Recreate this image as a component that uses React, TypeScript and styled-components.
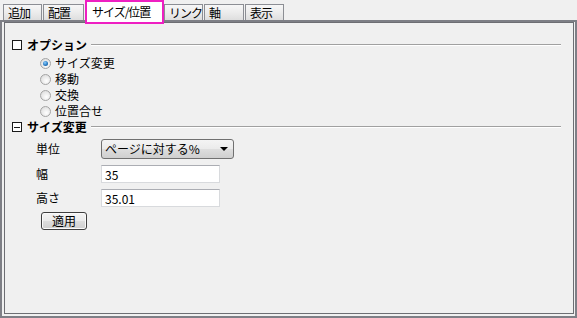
import React from "react";
import styled, { createGlobalStyle } from "styled-components";

const tabs = [
  { label: "追加", width: 39 },
  { label: "配置", width: 41 },
  { label: "サイズ/位置", width: 79, active: true },
  { label: "リンク", width: 39 },
  { label: "軸", width: 40 },
  { label: "表示", width: 39 },
];

const modes = ["サイズ変更", "移動", "交換", "位置合せ"];

export default function App() {
  return (
    <>
      <GlobalStyle />
      <Root>
        <TabBar>
          {tabs.map((t) => (
            <Tab key={t.label} $width={t.width} $active={!!t.active}>
              {t.label}
            </Tab>
          ))}
        </TabBar>
        <Panel>
          <Inner>
            <SectionHeader>
              <ToggleBox />
              <SectionTitle>オプション</SectionTitle>
              <Rule />
            </SectionHeader>
            <RadioList>
              {modes.map((m, i) => (
                <RadioRow key={m}>
                  <RadioDot $checked={i === 0} />
                  <span>{m}</span>
                </RadioRow>
              ))}
            </RadioList>

            <SectionHeader>
              <ToggleBox $open />
              <SectionTitle>サイズ変更</SectionTitle>
              <Rule />
            </SectionHeader>
            <FormGrid>
              <Label>単位</Label>
              <Dropdown>
                <span>ページに対する%</span>
                <Arrow />
              </Dropdown>
              <Label>幅</Label>
              <TextBox readOnly value="35" />
              <Label>高さ</Label>
              <TextBox readOnly value="35.01" />
            </FormGrid>
            <ApplyButton>適用</ApplyButton>
          </Inner>
        </Panel>
      </Root>
    </>
  );
}

const GlobalStyle = createGlobalStyle`
  html, body {
    margin: 0;
    padding: 0;
    background: #f0f0f0;
  }
  body {
    font-family: "Noto Sans CJK JP", "Noto Sans", sans-serif;
    font-size: 12px;
    color: #000;
  }
`;

const Root = styled.div`
  width: 577px;
  height: 318px;
  display: flex;
  flex-direction: column;
  overflow: hidden;
  background: #f0f0f0;
`;

const TabBar = styled.div`
  display: flex;
  align-items: flex-end;
  height: 20px;
  padding-left: 3px;
  gap: 1px;
`;

const Tab = styled.div<{ $width: number; $active: boolean }>`
  box-sizing: border-box;
  width: ${(p) => p.$width}px;
  height: ${(p) => (p.$active ? 24 : 16)}px;
  margin-bottom: ${(p) => (p.$active ? -4 : 0)}px;
  margin-right: ${(p) => (p.$active ? -1 : 0)}px;
  padding-left: ${(p) => (p.$active ? 5 : 4)}px;
  border: ${(p) => (p.$active ? "2px solid #ee1fc2" : "1px solid #8c8e94")};
  border-bottom: ${(p) => (p.$active ? "2px solid #ee1fc2" : "none")};
  background: ${(p) =>
    p.$active
      ? "#ffffff"
      : "linear-gradient(#f7f7f7 0%, #ececec 50%, #dedede 100%)"};
  line-height: ${(p) => (p.$active ? 19 : 15)}px;
  letter-spacing: -1px;
  white-space: nowrap;
  overflow: hidden;
  position: relative;
  z-index: ${(p) => (p.$active ? 1 : 0)};
`;

const Panel = styled.div`
  flex: 1;
  box-sizing: border-box;
  display: flex;
  border: 2px solid #7e7f86;
  padding: 0 1px 2px 2px;
`;

const Inner = styled.div`
  flex: 1;
  display: flex;
  flex-direction: column;
  align-items: flex-start;
  border: 1px solid #6d6e73;
  padding: 14px 0 0 7px;
`;

const SectionHeader = styled.div`
  display: flex;
  align-items: center;
  align-self: stretch;
  height: 16px;
  margin-right: 12px;
`;

const ToggleBox = styled.div<{ $open?: boolean }>`
  box-sizing: border-box;
  width: 10px;
  height: 10px;
  border: 1px solid #1a1a1a;
  background: #fff;
  margin-right: 5px;
  display: flex;
  align-items: center;
  justify-content: center;
  &::after {
    content: "";
    display: ${(p) => (p.$open ? "block" : "none")};
    width: 6px;
    height: 1px;
    background: #1a1a1a;
  }
`;

const SectionTitle = styled.span`
  font-weight: bold;
  line-height: 16px;
`;

const Rule = styled.div`
  flex: 1;
  height: 0;
  margin-left: 4px;
  border-top: 1px solid #a0a0a0;
  border-bottom: 1px solid #ffffff;
`;

const RadioList = styled.div`
  display: flex;
  flex-direction: column;
  padding-left: 28px;
  margin-top: 2px;
`;

const RadioRow = styled.div`
  display: flex;
  align-items: center;
  gap: 4px;
  height: 16px;
  line-height: 16px;
`;

const RadioDot = styled.div<{ $checked: boolean }>`
  box-sizing: border-box;
  width: 11px;
  height: 11px;
  border-radius: 50%;
  border: 1px solid #a4a4a4;
  background: radial-gradient(circle at 60% 65%, #ffffff 0%, #e2e2e2 70%, #cccccc 100%);
  display: flex;
  align-items: center;
  justify-content: center;
  &::after {
    content: "";
    display: ${(p) => (p.$checked ? "block" : "none")};
    width: 5px;
    height: 5px;
    border-radius: 50%;
    background: radial-gradient(circle at 40% 35%, #8fd0ff 0%, #2a7cc4 55%, #0e3f74 100%);
  }
`;

const FormGrid = styled.div`
  display: grid;
  grid-template-columns: 65px auto;
  row-gap: 6px;
  align-items: center;
  margin-top: 4px;
  padding-left: 24px;
`;

const Label = styled.span`
  line-height: 16px;
`;

const Dropdown = styled.div`
  box-sizing: border-box;
  width: 133px;
  height: 20px;
  display: flex;
  align-items: center;
  justify-content: space-between;
  padding: 0 5px 0 3px;
  border: 1px solid #707070;
  border-radius: 3px;
  background: linear-gradient(#f4f4f4 0%, #ebebeb 48%, #dddddd 52%, #cfcfcf 100%);
  line-height: 18px;
`;

const Arrow = styled.div`
  width: 0;
  height: 0;
  border-left: 4px solid transparent;
  border-right: 4px solid transparent;
  border-top: 4px solid #000;
`;

const TextBox = styled.input`
  box-sizing: border-box;
  width: 119px;
  height: 18px;
  margin: 0;
  padding: 0 3px;
  border: 1px solid #d8dadd;
  border-top-color: #abadb3;
  background: #fff;
  font: inherit;
  font-size: 12px;
  line-height: 16px;
  outline: none;
`;

const ApplyButton = styled.div`
  box-sizing: border-box;
  width: 46px;
  height: 18px;
  margin-top: 5px;
  margin-left: 29px;
  border: 1px solid #3f3f3f;
  border-radius: 3px;
  box-shadow: inset 0 0 0 1px #fafafa;
  background: linear-gradient(#f4f4f4 0%, #ebebeb 48%, #dddddd 52%, #cfcfcf 100%);
  text-align: center;
  line-height: 16px;
`;
